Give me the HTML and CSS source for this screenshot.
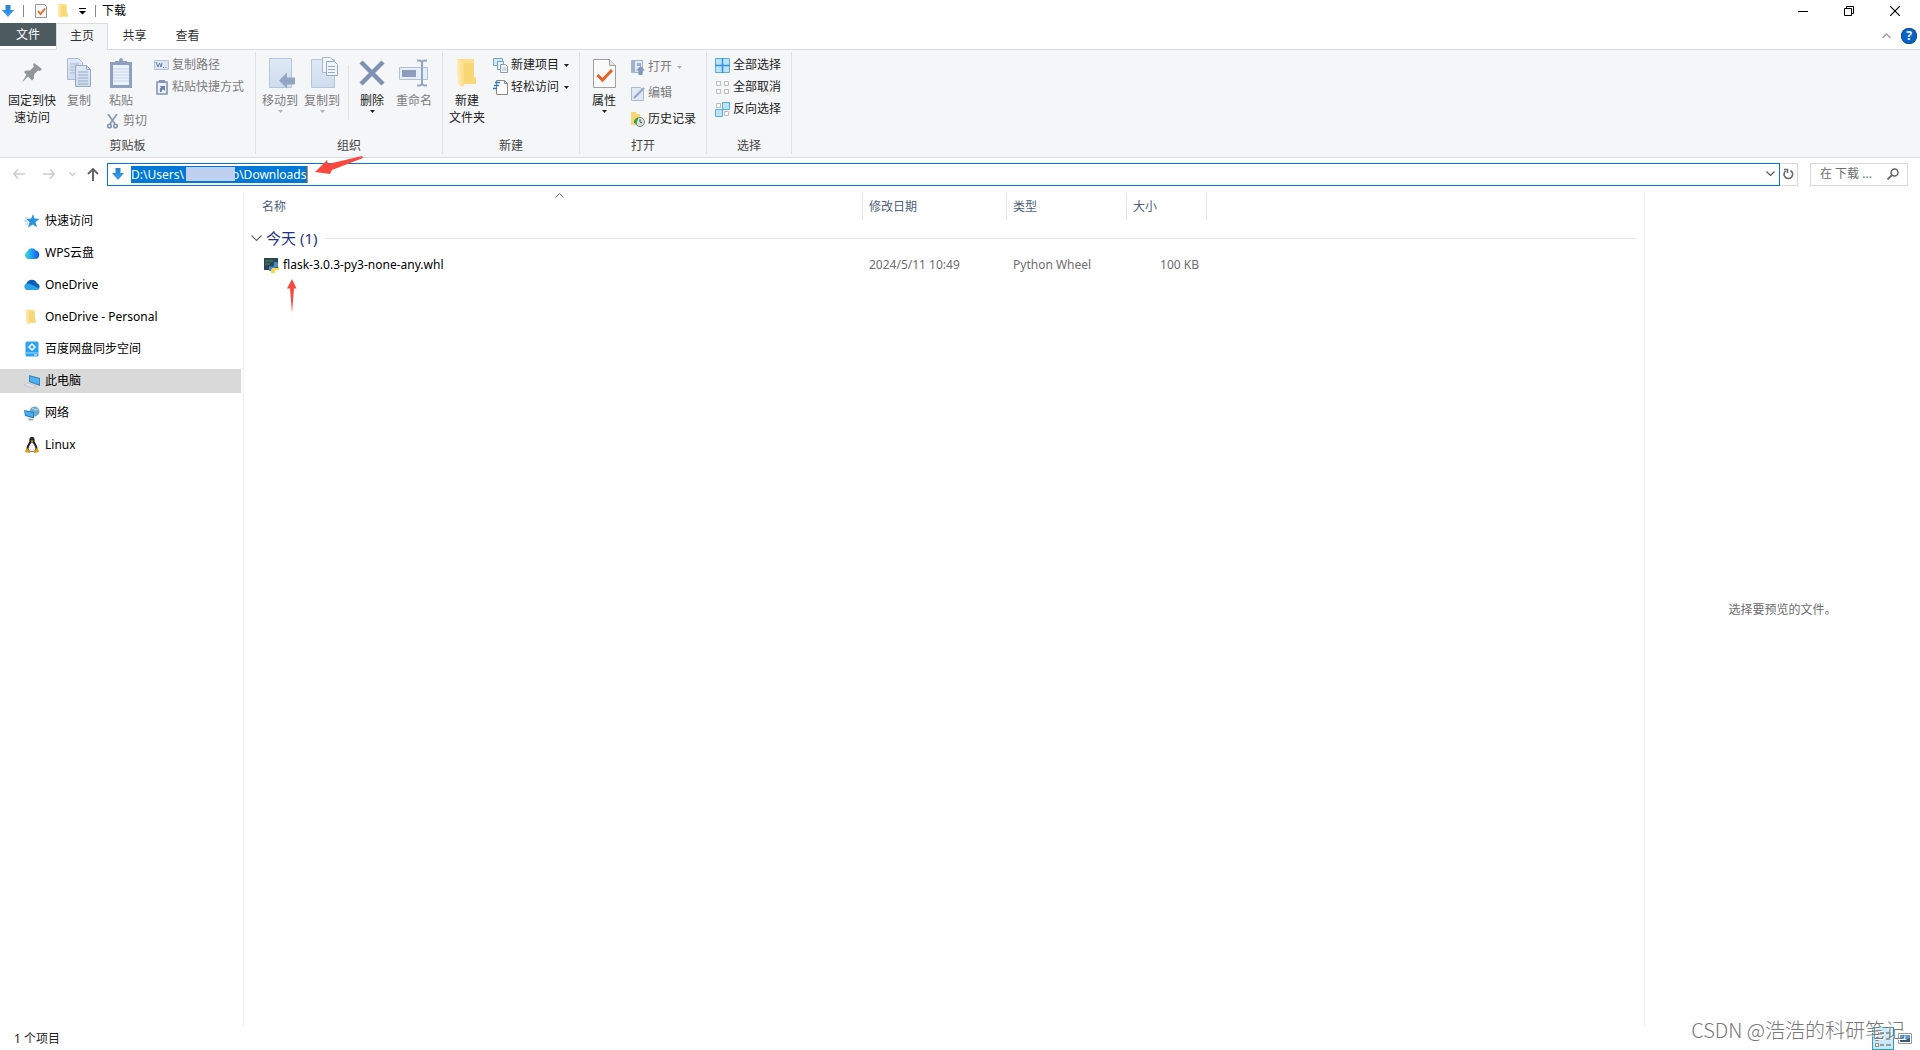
FILE: index.html
```html
<!DOCTYPE html>
<html lang="zh-CN">
<head>
<meta charset="utf-8">
<title>下载</title>
<link rel="stylesheet" href="styles.css">
</head>
<body>
<svg class="defs" aria-hidden="true">
  <defs>
    <linearGradient id="gFolder" x1="0" x2="1"><stop offset="0" stop-color="#ffeeb8"/><stop offset="1" stop-color="#fbdc86"/></linearGradient>
    <linearGradient id="gPage" x1="0" y1="0" x2="0" y2="1"><stop offset="0" stop-color="#dfe9f6"/><stop offset="1" stop-color="#cfdcee"/></linearGradient>
    <linearGradient id="gArrow" x1="0" y1="0" x2="0" y2="1"><stop offset="0" stop-color="#2480cf"/><stop offset="1" stop-color="#3ba0ee"/></linearGradient>
    <linearGradient id="gWps" x1="0" x2="1"><stop offset="0" stop-color="#3fe0c8"/><stop offset=".5" stop-color="#1f9df5"/><stop offset="1" stop-color="#1252e8"/></linearGradient>
    <symbol id="down" viewBox="0 0 12 12"><path d="M3.500 0h5v5H12L6 12 0 5h3.500z" fill="url(#gArrow)"/></symbol>
    <symbol id="folder" viewBox="0 0 20 28"><path d="M0 0h17v18l2 1v6H7l-1 2-5-3z" fill="#fbdf8c"/><path d="M7 4h10v14l2 1v6H7z" fill="#f8d777"/><path d="M0 0l7 4v21l-1 3-5-3z" fill="url(#gFolder)"/></symbol>
    <symbol id="caret" viewBox="0 0 5 3"><path d="M0 0h5L2.500 3z" fill="currentColor"/></symbol>
  </defs>
</svg>

<header class="titlebar">
  <svg class="i12" viewBox="0 0 12 12"><use href="#down"/></svg>
  <span class="bar"></span>
  <button class="quick" aria-label="属性"><svg width="12" height="14" viewBox="0 0 12 14"><path d="M.5.5h9l2 2v11H.5z" fill="#f8f8f8" stroke="#999"/><path d="M3 7l2.500 3L10 4.500" fill="none" stroke="#e8662c" stroke-width="1.800"/></svg></button>
  <button class="quick" aria-label="新建文件夹"><svg width="10" height="14" viewBox="0 0 20 28"><use href="#folder"/></svg></button>
  <button class="quick narrow" aria-label="自定义快速访问工具栏"><svg width="7" height="7" viewBox="0 0 7 7"><path d="M0 0h7v1H0zM0 3h7L3.500 6.500z"/></svg></button>
  <span class="bar last"></span>
  <h1 class="title">下载</h1>
  <div class="winbtns">
    <button aria-label="最小化"><svg width="10" height="10"><path d="M0 5.500h10" stroke="#000"/></svg></button>
    <button aria-label="还原"><svg width="10" height="10"><path d="M.5 2.500h7v7h-7zM2.500 2.500v-2h7v7h-2" fill="none" stroke="#000"/></svg></button>
    <button aria-label="关闭"><svg width="10" height="10"><path d="M0 0l10 10M10 0L0 10" stroke="#000" stroke-width="1.200"/></svg></button>
  </div>
</header>

<nav class="tabs">
  <button class="tab file">文件</button>
  <button class="tab active">主页</button>
  <button class="tab">共享</button>
  <button class="tab">查看</button>
  <div class="tabs-end">
    <button aria-label="折叠功能区"><svg width="9" height="6"><path d="M.5 5L4.500 1l4 4" fill="none" stroke="#999" stroke-width="1.300"/></svg></button>
    <button class="help" aria-label="帮助">?</button>
  </div>
</nav>

<section class="ribbon">
  <div class="group g-clip">
    <div class="body">
      <button class="big pin"><span class="pic"><svg width="22" height="22" viewBox="0 0 22 22"><path d="M13 1l8 6-2 2-2-.5-4 4 0 4-2 2-4-4-6 6 4.500-8L3 10l2-1.500h4l4-4-1-2z" fill="#8f979d"/></svg></span><span>固定到快<br>速访问</span></button>
      <button class="big copy" disabled><span class="pic"><svg width="24" height="30" viewBox="0 0 24 30"><path d="M.5.5h11l4 4v17H.5z" fill="url(#gPage)" stroke="#a9bad4"/><path d="M3 6h9M3 9h9M3 12h9M3 15h9" stroke="#a3b5d1"/><path d="M8.500 7.500h11l4 4v17h-15z" fill="url(#gPage)" stroke="#94a8c8"/><path d="M19.500 7.500v4h4M11 14h10M11 17h10M11 20h10M11 23h10M11 26h10" fill="none" stroke="#94a8c8"/></svg></span><span>复制</span></button>
      <div class="pastecol">
        <button class="big" disabled><span class="pic"><svg width="22" height="30" viewBox="0 0 22 30"><path d="M0 4h22v26H0z" fill="#8f9fbe"/><path d="M3 7h16v20H3z" fill="#eaf1fa"/><path d="M3 11h16M3 14h16M3 17h16M3 20h16M3 23h16" stroke="#c9d6e8"/><path d="M5 3h4c0-4 4-4 4 0h4v4H5z" fill="#8fa0bf"/></svg></span><span>粘贴</span></button>
        <button class="row" disabled><svg width="11" height="15" viewBox="0 0 11 15"><path d="M1 0l7 10M10 0L3 10" stroke="#8e9cb8" stroke-width="1.800"/><g fill="none" stroke="#7e90b2" stroke-width="1.500"><circle cx="2.500" cy="12" r="1.800"/><circle cx="8.500" cy="12" r="1.800"/></g></svg><span>剪切</span></button>
      </div>
      <div class="rows">
        <button class="row" disabled><svg width="15" height="10" viewBox="0 0 15 10"><path d="M.5.5h14v9H.5z" fill="#dce6f3" stroke="#b2c2da"/><path d="M2 2l2 5 1.500-4L7 7l1-4M9 7.500h1M11.500 7.500h1" fill="none" stroke="#6f7f9f"/></svg><span>复制路径</span></button>
        <button class="row" disabled><svg width="15" height="15" viewBox="0 0 15 15"><path d="M3 2h10v12H3z" fill="#eaf1fa" stroke="#8394b5" stroke-width="1.600"/><path d="M5 0h6v3H5z" fill="#8394b5"/><path d="M6 12c-.5-3 0-4 1-4.500L6 6h5v5L9.500 9.500C8 9.500 8 10 7.500 12z" fill="#6d80a6"/></svg><span>粘贴快捷方式</span></button>
      </div>
    </div>
    <div class="caption">剪贴板</div>
  </div>

  <div class="group g-org">
    <div class="body">
      <button class="big w42" disabled><span class="pic nudge"><svg width="28" height="32" viewBox="0 0 28 32"><path d="M1.500 1.500h22v29h-22z" fill="url(#gPage)" stroke="#b6c6de"/><path d="M11 23.500l8-8v5h8v7h-8v4z" fill="#93a5c3"/></svg></span><span>移动到</span><svg class="caret" viewBox="0 0 5 3"><use href="#caret"/></svg></button>
      <button class="big w42" disabled><span class="pic nudge"><svg width="28" height="32" viewBox="0 0 28 32"><path d="M1.500 2.500h23v28h-23z" fill="url(#gPage)" stroke="#b6c6de"/><path d="M12.500.5h8l3 3v12h-11z" fill="#f2f6fb" stroke="#a7b7d0"/><path d="M16.500 4.500h8l3 3v11h-11z" fill="#f2f6fb" stroke="#94a8c8"/><path d="M18 9.500h7M18 12.500h7M18 15.500h7" stroke="#94a8c8"/></svg></span><span>复制到</span><svg class="caret" viewBox="0 0 5 3"><use href="#caret"/></svg></button>
      <span class="split"></span>
      <button class="big w42"><span class="pic"><svg width="26" height="26" viewBox="0 0 26 26"><path d="M2 2l22 22M24 2L2 24" stroke="#7f90b3" stroke-width="4.500"/></svg></span><span>删除</span><svg class="caret" viewBox="0 0 5 3"><use href="#caret"/></svg></button>
      <button class="big w42" disabled><span class="pic"><svg width="30" height="28" viewBox="0 0 30 28"><path d="M.5 8.500h28v12H.5z" fill="#e6eef9" stroke="#aebfd9"/><path d="M3 11h14v7H3z" fill="#8b9cbc"/><path d="M18 1.500c3 0 5 0 5 2.500v20c0 2.500-2 2.500-5 2.500M28 1.500c-3 0-5 0-5 2.500v20c0 2.500 2 2.500 5 2.500" fill="none" stroke="#94a5c3" stroke-width="2"/></svg></span><span>重命名</span></button>
    </div>
    <div class="caption">组织</div>
  </div>

  <div class="group g-new">
    <div class="body">
      <button class="big w46"><span class="pic"><svg width="20" height="28" viewBox="0 0 20 28"><use href="#folder"/></svg></span><span>新建<br>文件夹</span></button>
      <div class="rows">
        <button class="row"><svg width="15" height="15" viewBox="0 0 15 15"><path d="M.5.500h9v7h-9z" fill="#cfe6f5" stroke="#7fa6bf"/><path d="M4.500 3.500h6v8h-6z" fill="#e8f2f8" stroke="#6fa0bf"/><path d="M7.500 6.500h5l2 2v6h-7z" fill="#f5f7f9" stroke="#8a99a5"/><path d="M9 10h4M9 12h4" stroke="#a9bccb"/></svg><span>新建项目</span><svg class="caret" viewBox="0 0 5 3"><use href="#caret"/></svg></button>
        <button class="row"><svg width="15" height="16" viewBox="0 0 15 16"><path d="M3.500 1.500h8l3 3v11h-11z" fill="#fff" stroke="#888"/><path d="M11.500 1.500v3h3" fill="none" stroke="#888"/><path d="M2 3.500h5M1 6.500h5M0 9.500h4" stroke="#2b78c4" stroke-width="1.500"/></svg><span>轻松访问</span><svg class="caret" viewBox="0 0 5 3"><use href="#caret"/></svg></button>
      </div>
    </div>
    <div class="caption">新建</div>
  </div>

  <div class="group g-open">
    <div class="body">
      <button class="big w46"><span class="pic"><svg width="23" height="29" viewBox="0 0 23 29"><path d="M.5.5h16l6 6v22H.5z" fill="#fafafa" stroke="#a0a0a0"/><path d="M16.500.5v6h6" fill="#e4e4e4" stroke="#a0a0a0"/><path d="M4.500 16l5 5L19 11" fill="none" stroke="#e8622a" stroke-width="3"/></svg></span><span>属性</span><svg class="caret" viewBox="0 0 5 3"><use href="#caret"/></svg></button>
      <div class="rows tall">
        <button class="row" disabled><svg width="14" height="15" viewBox="0 0 14 15"><path d="M.5.500h11v12H.5z" fill="#dfe8f4" stroke="#a3b4d0"/><path d="M1 1h3v11H1z" fill="#9fb0cc"/><path d="M6 3h4v3H6z" fill="#9fb0cc"/><path d="M9.500 6L14 10.500h-2.500V15h-4v-4.500H5z" fill="#8395b6"/></svg><span>打开</span><svg class="caret" viewBox="0 0 5 3"><use href="#caret"/></svg></button>
        <button class="row" disabled><svg width="14" height="15" viewBox="0 0 14 15"><path d="M.5 1.500h9l3 3v10H.5z" fill="#dfe8f4" stroke="#a9bad4"/><path d="M3 12L13 2" stroke="#93a5c3" stroke-width="2"/></svg><span>编辑</span></button>
        <button class="row"><svg width="14" height="15" viewBox="0 0 14 15"><path d="M0 0h5l1 2h3v11H0z" fill="#f8d674"/><circle cx="9" cy="10" r="4.500" fill="#d9dfdc" stroke="#6d8a76"/><path d="M9 7.500V10l2 1" fill="none" stroke="#444"/><path d="M3 11c0-4 2-5 4-5.500L7 8c-1 0-1.500 1.500-1 4z" fill="#27a53c"/></svg><span>历史记录</span></button>
      </div>
    </div>
    <div class="caption">打开</div>
  </div>

  <div class="group g-select">
    <div class="body">
      <div class="rows">
        <button class="row"><svg width="15" height="15"><path d="M.5.500h14v14H.5z" fill="#bfe1fa" stroke="#53aeec"/><path d="M7.500 0v15M0 7.500h15" stroke="#2e93e0" stroke-width="1.500"/></svg><span>全部选择</span></button>
        <button class="row"><svg width="15" height="15"><path d="M1.500 1.500h4v4h-4zM9.500 1.500h4v4h-4zM1.500 9.500h4v4h-4zM9.500 9.500h4v4h-4z" fill="#fff" stroke="#bbb"/></svg><span>全部取消</span></button>
        <button class="row"><svg width="15" height="15"><path d="M1.500 1.500h4v4h-4zM9.500 9.500h4v4h-4z" fill="#fff" stroke="#bbb"/><path d="M7.500.500h7v7h-7zM.5 7.500h7v7h-7z" fill="#bfe1fa" stroke="#53aeec"/></svg><span>反向选择</span></button>
      </div>
    </div>
    <div class="caption">选择</div>
  </div>
</section>

<div class="navbar">
  <div class="navbtns">
    <button class="off" aria-label="后退"><svg width="12" height="10"><path d="M5 .5L.8 5 5 9.500M1 5h11" fill="none" stroke="currentColor" stroke-width="1.500"/></svg></button>
    <button class="off" aria-label="前进"><svg width="12" height="10"><path d="M7 .5L11.200 5 7 9.500M11 5H0" fill="none" stroke="currentColor" stroke-width="1.500"/></svg></button>
    <button class="off small" aria-label="最近位置"><svg width="7" height="5"><path d="M.5.500l3 3 3-3" fill="none" stroke="currentColor" stroke-width="1.500"/></svg></button>
    <button aria-label="上移"><svg width="12" height="13"><path d="M1 6l5-5 5 5M6 1.500V13" fill="none" stroke="currentColor" stroke-width="2"/></svg></button>
  </div>
  <div class="address">
    <svg class="i12" viewBox="0 0 12 12"><use href="#down"/></svg>
    <div class="pathwrap">
      <input class="path" aria-label="地址" value="D:\Users\&#8195;&#8195;&#8195;&#8195;o\Downloads">
      <span class="mask"></span>
    </div>
    <button class="drop" aria-label="以前的位置"><svg width="9" height="6"><path d="M.5.500l4 4 4-4" fill="none" stroke="#555" stroke-width="1.200"/></svg></button>
  </div>
  <button class="refresh" aria-label="刷新"><svg width="11" height="12" viewBox="0 0 11 12"><path d="M7.500 2.500A4.300 4.300 0 1 1 2.500 3M1 1.500h3.500V5" fill="none" stroke="#666" stroke-width="1.600"/></svg></button>
  <div class="search">
    <input aria-label="搜索" placeholder="在 下载 ...">
    <svg width="12" height="12" viewBox="0 0 12 12"><circle cx="7.500" cy="4.500" r="3.500" fill="none" stroke="#666" stroke-width="1.500"/><path d="M5 7L.5 11.500" stroke="#666" stroke-width="1.800"/></svg>
  </div>
</div>

<main class="main">
  <aside class="tree">
    <a href="#"><svg viewBox="0 0 16 16"><path d="M9 1l1.500 4.500 5 .3-4 3.400 1.500 5L8.700 11.500 4 14.500l1.500-5.300L2.500 6l4.600-.5z" fill="#2b93dc"/><path d="M1 5h3M0 8h4M1 11h3" stroke="#8cc8f0"/></svg>快速访问</a>
    <a href="#"><svg viewBox="0 0 16 16"><path d="M4 14a4 4 0 0 1-.8-7.500A5 5 0 0 1 12 5.500 4.400 4.400 0 0 1 12 14z" fill="url(#gWps)"/></svg>WPS云盘</a>
    <a href="#"><svg viewBox="0 0 16 16"><path d="M3.500 13A3.600 3.600 0 0 1 2.500 6.500 5.600 5.600 0 0 1 13 6.200 3.500 3.500 0 0 1 13 13z" fill="#0f5fb0"/><path d="M3.500 13A3.500 3.500 0 0 1 1 7.500L5 6.500l10.500 5A3 3 0 0 1 13 13z" fill="#2ba3ea"/></svg>OneDrive</a>
    <a href="#"><svg viewBox="-3 -1 30 30"><use href="#folder" width="20" height="28"/></svg>OneDrive - Personal</a>
    <a href="#"><svg viewBox="0 0 16 16"><rect x="1.500" y=".5" width="13" height="15" rx="1.500" fill="#2aa3f3"/><path d="M1.500 12h13" stroke="#a8dcff"/><path d="M8 3l3 3-3 3-3-3z" fill="none" stroke="#fff" stroke-width="1.500"/><path d="M10 14h3" stroke="#fff"/></svg>百度网盘同步空间</a>
    <a href="#" class="on"><svg viewBox="0 0 16 16"><path d="M5 2l11 3v8L5 9z" fill="#3b82b8"/><path d="M6 3.500l9 2.300v5.500L6 8.200z" fill="#4db2f2"/><path d="M0 12l4-2 8 3-3 2z" fill="#dfe6ea" stroke="#aab"  stroke-width=".5"/></svg>此电脑</a>
    <a href="#"><svg viewBox="0 0 16 16"><circle cx="10.500" cy="6.500" r="5" fill="#6fa9cc"/><path d="M8 3l4 2 2-1" stroke="#b8dcef" fill="none"/><path d="M0 5l10 2v6.500L1 11z" fill="#2d7cb8"/><path d="M1 6.300l8 1.600v4.200L2 10z" fill="#45b1f5"/><path d="M4 13l5 1v1.500H5z" fill="#9ab"/></svg>网络</a>
    <a href="#"><svg viewBox="0 0 16 16"><path d="M8 0C5.500 0 5.300 2 5.400 4 5.300 6 2.500 8 2.500 12l2 3h7l2-3c0-4-2.800-6-2.900-8C10.700 2 10.500 0 8 0z" fill="#222"/><path d="M8 5c-1.500 2-3.500 4-3.500 7L6 14.500h4l1.500-2.500C11.500 9 9.500 7 8 5z" fill="#f4f4f4"/><path d="M6.500 3.500h3L8 5.500z" fill="#e8a820"/><path d="M2.500 10.500L6.500 14.500 5.500 16 1 15zM13.500 10.500l-4 4 1 1.500 4.500-1z" fill="#d99a1c"/></svg>Linux</a>
  </aside>

  <section class="files">
    <table>
      <colgroup><col class="c-name"><col class="c-date"><col class="c-type"><col class="c-size"><col></colgroup>
      <thead>
        <tr><th class="name">名称<svg class="sort" width="9" height="5"><path d="M.5 4.500l4-4 4 4" fill="none" stroke="#666"/></svg></th><th>修改日期</th><th>类型</th><th>大小</th><td></td></tr>
      </thead>
      <tbody>
        <tr class="grp"><td colspan="5"><div><svg width="11" height="7"><path d="M.5.500l5 5 5-5" fill="none" stroke="#666" stroke-width="1.200"/></svg><span>今天 (1)</span><i></i></div></td></tr>
        <tr class="item"><td><div><svg width="15" height="15" viewBox="0 0 15 15"><path d="M0 0h14v12H0z" fill="#2b4654"/><path d="M1 3h8M1 6h5" stroke="#4f8a5a"/><path d="M5 8.500h5V4h3l1 2v3l-4 1-1 3H5z" fill="#4a8cc8"/><path d="M15 8v4h-4v3H7v-3l1.500-2H14z" fill="#fbd648"/></svg><span>flask-3.0.3-py3-none-any.whl</span></div></td><td>2024/5/11 10:49</td><td>Python Wheel</td><td class="num">100 KB</td><td></td></tr>
      </tbody>
    </table>
  </section>

  <aside class="preview">选择要预览的文件。</aside>
</main>

<footer class="status">
  <span>1 个项目</span>
  <div class="views">
    <button class="view on" aria-label="详细信息"><svg width="18" height="16" viewBox="0 0 18 16"><path d="M1.500.500h3v3h-3zM1.500 6.500h3v3h-3zM1.500 12.500h3v3h-3z" fill="#fff" stroke="#888"/><path d="M6 2h4M12 2h5M6 8h4M12 8h5M6 14h4M12 14h5" stroke="#555"/></svg></button>
    <button class="view" aria-label="大缩略图"><svg width="14" height="11"><path d="M.5.500h13v10H.5z" fill="#fff" stroke="#999"/><path d="M2 2h10v4H2z" fill="#5a9be8"/><path d="M2 6l5 1 5-2v4H2z" fill="#3c5d63"/></svg></button>
  </div>
</footer>

<div class="watermark">CSDN @浩浩的科研笔记</div>
<svg class="note note-path" width="48" height="19" viewBox="0 0 48 19"><path d="M0 16L12 4l1 4L47 0l1 2-31 12-2 4z" fill="#f9493f"/></svg>
<svg class="note note-file" width="10" height="34" viewBox="0 0 10 34"><path d="M5 0l4.500 9.500H7L5 34 3 9.500H0z" fill="#f9493f"/></svg>
</body>
</html>
```
FILE: styles.css
```css
* { box-sizing: border-box; }
body {
  margin: 0;
  height: 100vh;
  display: flex;
  flex-direction: column;
  position: relative;
  overflow: hidden;
  background: #fff;
  color: #000;
  font: 12px/16px "Noto Sans", "Noto Sans CJK SC", sans-serif;
}
button, input { font: inherit; color: inherit; border: 0; padding: 0; margin: 0; background: none; }
button { display: flex; align-items: center; justify-content: center; }
svg { display: block; flex: none; }
.defs { position: absolute; width: 0; height: 0; }
.i12 { width: 12px; height: 12px; }

.titlebar { display: flex; align-items: center; height: 23px; padding: 0 0 1px 2px; }
.titlebar .bar { width: 1px; height: 12px; margin: 0 6px 0 9px; background: #888; }
.titlebar .last { margin: 0 6px 0 4px; }
.quick { width: 22px; height: 18px; }
.quick.narrow { width: 17px; }
.title { margin: 0; font-size: 12px; font-weight: 400; line-height: 16px; }
.winbtns { display: flex; margin-left: auto; padding-right: 2px; }
.winbtns button { width: 46px; height: 18px; }

.tabs { display: flex; height: 26px; align-items: stretch; }
.tab { width: 53px; color: #333; }
.tab.file { width: 56px; height: 23px; background: #4d5a60; color: #fff; }
.tab.active { width: 52px; height: 27px; border: 1px solid #dadbdc; border-bottom: 0; background: #f4f6f8; z-index: 1; padding-bottom: 2px; }
.tabs-end { display: flex; align-items: center; gap: 10px; margin-left: auto; padding-right: 3px; }
.help { width: 16px; height: 16px; border-radius: 50%; background: #0a64c8; color: #fff; font-weight: 700; box-shadow: inset 0 0 0 1px #0b4f94; }

.ribbon { display: flex; height: 109px; padding: 2px 0 3px; background: #f4f6f8; border-top: 1px solid #dadbdc; border-bottom: 1px solid #dadbdc; color: #222; }
.group { display: flex; flex-direction: column; border-right: 1px solid #dfe2e5; }
.g-clip { width: 256px; }
.g-org { width: 187px; }
.g-new { width: 137px; }
.g-open { width: 127px; }
.g-select { width: 85px; }
.body { display: flex; flex: 1; padding-top: 2px; align-items: flex-start; }
.caption { height: 17px; line-height: 17px; text-align: center; color: #444; }
.big { flex-direction: column; justify-content: flex-start; line-height: 17px; }
.ribbon button:disabled { color: #7c7c7c; }
.ribbon button:disabled .caret { color: #b0b0b0; }
.pic { display: flex; align-items: center; height: 38px; }
.pic.nudge { padding-left: 4px; }
.big .caret { margin-top: 1px; }
.caret { width: 5px; height: 3px; }
.pin { width: 64px; }
.copy { width: 30px; }
.w42 { width: 42px; }
.w46 { width: 48px; }
.pastecol { display: flex; flex-direction: column; align-items: flex-start; padding-left: 13px; width: 60px; }
.pastecol .big { width: 28px; }
.row { height: 22px; gap: 3px; justify-content: flex-start; white-space: nowrap; }
.row .caret { margin-left: 2px; }
.pastecol .row { gap: 5px; height: 24px; }
.tall .row { height: 26px; }
.g-org .body { padding-left: 3px; }
.split { width: 1px; height: 55px; margin: 11px 2px 0 5px; background: #dfe2e5; }
.g-new .rows { padding-left: 2px; }
.g-open .rows { padding-left: 3px; }
.g-select .rows { padding-left: 8px; }

.navbar { display: flex; align-items: center; height: 34px; padding: 0 12px 2px 13px; color: #666; }
.navbtns { display: flex; align-items: center; gap: 18px; padding-right: 8px; }
.navbtns .off { color: #ccc; }
.navbtns .small { margin: 0 -7px 0 -4px; }
.address { display: flex; align-items: center; flex: 1; height: 23px; border: 1px solid #0078d7; padding: 0 4px; }
.pathwrap { position: relative; margin-left: 7px; border-right: 1px solid #e8873a; }
.path { display: block; width: 176px; height: 17px; line-height: 17px; background: #0078d7; color: #fff; }
.mask { position: absolute; left: 55px; top: 1px; width: 49px; height: 14px; background: #c1d0f0; }
.drop { margin-left: auto; }
.refresh { width: 18px; height: 23px; border: 1px solid #d9d9d9; border-left: 0; }
.search { display: flex; align-items: center; width: 98px; height: 23px; margin-left: 12px; padding: 0 8px 0 9px; border: 1px solid #d9d9d9; }
.search input { width: 0; flex: 1; }
.search input::placeholder { color: #6d6d6d; opacity: 1; }

.main { display: flex; flex: 1; min-height: 0; padding-top: 1px; }
.tree { width: 244px; border-right: 1px solid #f0f0f0; padding-top: 16px; display: flex; flex-direction: column; gap: 8px; }
.tree a { display: flex; align-items: center; gap: 5px; height: 24px; width: 241px; padding-left: 24px; color: #000; text-decoration: none; }
.tree svg { width: 16px; height: 16px; }
.tree a.on { background: #d9d9d9; }

.files { flex: 1; padding-right: 8px; }
table { width: 100%; table-layout: fixed; border-collapse: separate; border-spacing: 0; }
.c-name { width: 619px; }
.c-date { width: 144px; }
.c-type { width: 120px; }
.c-size { width: 80px; }
td, th { padding: 0 6px; text-align: left; font-weight: 400; color: #6d6d6d; white-space: nowrap; }
th { height: 27px; border-right: 1px solid #e5e5e5; color: #4c607a; position: relative; }
th.name { padding-left: 18px; }
.sort { position: absolute; left: 311px; top: 0; }
.grp td { height: 36px; padding: 0 0 0 7px; }
.grp div { display: flex; align-items: center; gap: 4px; }
.grp span { font-size: 15px; line-height: 20px; color: #1e3287; }
.grp i { flex: 1; height: 1px; margin-left: 4px; background: #e2e2e2; }
.item td { height: 18px; }
.item td:first-child { padding-left: 20px; color: #000; }
.item div { display: flex; align-items: center; gap: 4px; }
.item .num { text-align: right; padding-right: 8px; }

.preview { display: flex; align-items: center; justify-content: center; width: 276px; border-left: 1px solid #f0f0f0; color: #6d6d6d; }

.status { display: flex; align-items: center; height: 23px; padding: 0 8px 0 14px; color: #1e1e1e; }
.views { display: flex; align-items: center; margin-left: auto; gap: 4px; }
.view.on { width: 22px; height: 23px; background: #cce8f7; border: 1px solid #2c9bd3; }

.watermark { position: absolute; right: 15px; bottom: 6px; font: 300 20px/28px "Noto Sans CJK SC", sans-serif; color: #777; text-shadow: 1px 1px 0 #fff; }
.note { position: absolute; }
.note-path { left: 315px; top: 156px; }
.note-file { left: 287px; top: 279px; }
```
